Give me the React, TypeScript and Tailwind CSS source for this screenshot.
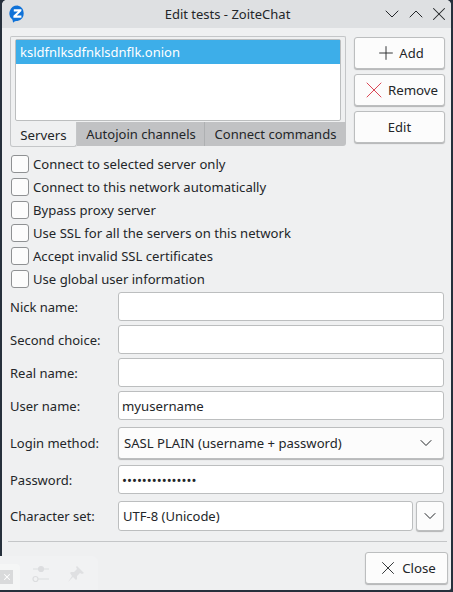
import { ChevronDown, ChevronUp, Plus, X } from "lucide-react";

const font = "font-['Noto_Sans',sans-serif]";

const checks = [
  "Connect to selected server only",
  "Connect to this network automatically",
  "Bypass proxy server",
  "Use SSL for all the servers on this network",
  "Accept invalid SSL certificates",
  "Use global user information",
];

function Logo() {
  return (
    <svg width="17" height="18" viewBox="0 0 17 18">
      <path d="M8.500 0.500a8 8 0 0 1 0 15.600c-1.600 0-3 0-4.400 1.600l-0.600-2.900A8 8 0 0 1 8.500 0.500z" fill="#0f72d8" />
      <path d="M4.800 4.200h7.600v1.800l-4.600 4.400h4.600v2.300H4.400v-1.900l4.600-4.300H4.800z" fill="#ffffff" />
    </svg>
  );
}

function PushButton({ children, className }: { children: React.ReactNode; className: string }) {
  return (
    <button className={`flex items-center justify-center rounded-[3px] border border-[#bcbebf] bg-[#fcfcfc] shadow-[0_1px_1px_rgba(0,0,0,0.25)] text-[#232629] ${className}`}>
      {children}
    </button>
  );
}

function Field({ label, value, h, mt }: { label: string; value?: string; h: string; mt: string }) {
  return (
    <div className={`flex items-center ${mt}`}>
      <span className="w-[108px] shrink-0">{label}</span>
      <div className={`flex-1 flex items-center rounded-[3px] border border-[#bcbebf] bg-white pl-[3px] pr-[5px] text-[13.2px] ${h}`}>{value}</div>
    </div>
  );
}

export default function App() {
  return (
    <div className={`relative w-[453px] h-[592px] overflow-hidden bg-[#26303c] text-[13px] leading-[18px] text-[#232629] ${font}`}>
      <div className="mx-[2px] h-[590px] rounded-t-[5px] rounded-b-[2px] bg-[#eff0f1] flex flex-col">
        {/* Title bar */}
        <div className="h-[28px] shrink-0 rounded-t-[5px] bg-[#dee0e2] flex items-center pl-[7px] pr-[1px]">
          <Logo />
          <div className="flex-1 text-center pl-[49px] text-[#232629]">Edit tests - ZoiteChat</div>
          <div className="flex items-center">
            <ChevronDown size={24} strokeWidth={1} />
            <ChevronUp size={24} strokeWidth={1} />
            <X size={22} strokeWidth={1.1} />
          </div>
        </div>

        <div className="flex-1 flex flex-col pl-[8px] pr-[3px] pt-[8px]">
          {/* Server list + buttons */}
          <div className="flex items-start">
            <div className="w-[336px] shrink-0">
              <div className="h-[86px] rounded-t-[2px] border border-[#c4c6c8] border-b-0 px-[4px] pt-[2px]">
                <div className="h-[82px] rounded-[2px] border border-[#bcbebf] bg-white">
                  <div className="h-[24px] bg-[#3daee9] text-white text-[13px] flex items-center pl-[4px]">ksldfnlksdfnklsdnflk.onion</div>
                </div>
              </div>
              <div className="flex h-[25px] text-[13px]">
                <div className="w-[67px] h-[25px] flex items-center justify-center rounded-b-[3px] border border-t-0 border-[#c4c6c8] bg-[#eff0f1] text-[13.3px] pt-[1px]">Servers</div>
                <div className="w-[128px] h-[24px] flex items-center justify-center border-r border-[#aeb0b2] bg-[#c1c2c4] pl-[1px]">Autojoin channels</div>
                <div className="flex-1 h-[24px] flex items-center justify-center rounded-br-[3px] bg-[#c1c2c4]">Connect commands</div>
              </div>
            </div>
            <div className="ml-[8px] mt-[1px] flex flex-col gap-[5px] w-[91px]">
              <PushButton className="h-[32px] gap-[2px]">
                <Plus size={22} strokeWidth={1} />
                <span>Add</span>
              </PushButton>
              <PushButton className="h-[32px] gap-0">
                <X size={28} strokeWidth={0.85} className="text-[#da4453] -ml-[1px]" />
                <span className="text-[13.3px]">Remove</span>
              </PushButton>
              <PushButton className="h-[32px]">Edit</PushButton>
            </div>
          </div>

          {/* Options */}
          <div className="mt-[8px] flex flex-col gap-[5px] pl-[1px]">
            {checks.map((c) => (
              <label key={c} className="flex items-center h-[18px] gap-[4px]">
                <span className="w-[18px] h-[18px] shrink-0 rounded-[3px] border border-[#8f9193] bg-[#fcfcfc]" />
                <span className="text-[13.1px]">{c}</span>
              </label>
            ))}
          </div>

          {/* Form */}
          <div className="w-[434px]">
            <Field label="Nick name:" h="h-[29px]" mt="mt-[4px]" />
            <Field label="Second choice:" h="h-[29px]" mt="mt-[4px]" />
            <Field label="Real name:" h="h-[29px]" mt="mt-[4px]" />
            <Field label="User name:" value="myusername" h="h-[29px]" mt="mt-[4px]" />
            <div className="flex items-center mt-[7px]">
              <span className="w-[108px] shrink-0">Login method:</span>
              <PushButton className="flex-1 h-[32px] !justify-between pl-[5px] pr-[7px]">
                <span className="text-[13.1px]">SASL PLAIN (username + password)</span>
                <ChevronDown size={20} strokeWidth={1.2} />
              </PushButton>
            </div>
            <Field label="Password:" value="•••••••••••••••" h="h-[29px]" mt="mt-[6px]" />
            <div className="flex items-center mt-[7px]">
              <span className="w-[108px] shrink-0">Character set:</span>
              <div className="flex-1 h-[30px] flex items-center rounded-[3px] border border-[#bcbebf] bg-white pl-[4px] pr-[5px]">UTF-8 (Unicode)</div>
              <PushButton className="ml-[3px] w-[28px] h-[30px]">
                <ChevronDown size={20} strokeWidth={1.2} />
              </PushButton>
            </div>
          </div>

          <div className="mt-[10px] mr-[1px] -ml-[2px] h-px bg-[#c4c6c8]" />

          <div className="mt-[10px] flex justify-end">
            <PushButton className="w-[83px] h-[32px] gap-[3px]">
              <X size={22} strokeWidth={1} />
              <span className="text-[13.3px]">Close</span>
            </PushButton>
          </div>
        </div>
      </div>

      {/* Faint panel showing through at the bottom left */}
      <div className="absolute left-0 top-[556px] w-[98px] h-[34px] rounded-tr-[6px] bg-[#f1f2f3] flex items-center">
        <div className="w-[20px] h-[26px] mt-[8px] rounded-tr-[4px] bg-[#f5f6f6] flex items-center">
          <div className="w-[13px] h-[14px] bg-[#d9dadb] flex items-center justify-center">
            <X size={10} strokeWidth={2.500} className="text-white" />
          </div>
        </div>
        <svg width="18" height="20" viewBox="0 0 18 20" className="ml-[12px] mt-[2px]" fill="none" stroke="#dcdddf" strokeWidth="1.200">
          <path d="M1 5h16M1 15h16" />
          <circle cx="9" cy="5" r="2.500" fill="#dcdddf" />
          <circle cx="3.500" cy="15" r="2.500" fill="#f1f2f3" />
        </svg>
        <svg width="18" height="18" viewBox="0 0 18 18" className="ml-[17px] mt-[2px]" fill="#dfe0e2">
          <path d="M10 1l7 7-2 1-2-1-3 3 0 3-1 1-3-3-5 5 4-6-2-3 1-1 3 0 3-3-1-2z" />
        </svg>
      </div>
    </div>
  );
}
